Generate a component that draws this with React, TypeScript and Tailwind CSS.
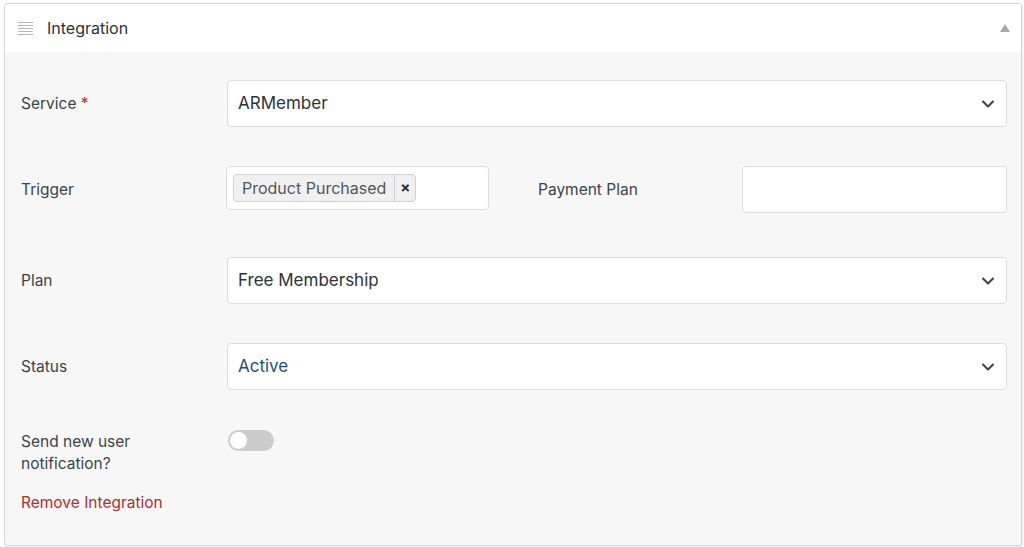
import { ChevronDown } from "lucide-react"

function Chevron() {
  return <ChevronDown className="h-5 w-5 text-[#3c434a]" strokeWidth={2.5} />
}

function SelectBox({ value, blue }: { value: string; blue?: boolean }) {
  return (
    <div className="flex h-[47px] flex-1 items-center justify-between rounded-[4px] border border-[#dcdcde] bg-white pl-[10px] pr-[8px]">
      <span className={blue ? "text-[17px] text-[#1d4f7c]" : "text-[17px] text-[#2c3338]"}>{value}</span>
      <Chevron />
    </div>
  )
}

export default function App() {
  return (
    <div className="h-[547px] w-[1024px] bg-white pt-[3px] pl-[4px] font-['Inter',sans-serif] text-[#3c434a]">
      <div className="h-[543px] w-[1018px] overflow-hidden rounded-[3px] border border-[#d4d4d6] bg-[#f7f7f7] shadow-[1px_1px_2px_rgba(0,0,0,0.08)]">
        <div className="flex h-[48px] items-center justify-between bg-white pl-[13px] pr-[11px]">
          <div className="flex items-center">
            <div className="flex w-[15px] flex-col gap-[2px]">
              {[0, 1, 2, 3, 4].map((i) => <div key={i} className="h-[1px] bg-[#b4b6b9]" />)}
            </div>
            <span className="ml-[14px] text-[16px] text-[#2c3338]">Integration</span>
          </div>
          <div className="h-0 w-0 border-x-[5px] border-b-[8px] border-x-transparent border-b-[#a7aaad]" />
        </div>
        <div className="pl-[16px] pr-[14px] pt-[28px]">
          <div className="flex items-center">
            <div className="w-[206px] text-[15.5px]">Service <span className="text-[#b32d2e]">*</span></div>
            <SelectBox value="ARMember" />
          </div>
          <div className="mt-[39px] flex items-start">
            <div className="w-[205px] pt-[13px] text-[15.5px] leading-[22px]">Trigger</div>
            <div className="flex h-[44px] w-[263px] items-center rounded-[4px] border border-[#dcdcde] bg-white pl-[6px]">
              <div className="flex h-[28px] items-center rounded-[4px] border border-[#d0d0d0] bg-[#f0f0f0]">
                <span className="px-[8px] text-[16px] text-[#50575e]">Product Purchased</span>
                <span className="flex h-full w-[21px] items-center justify-center border-l border-[#d0d0d0] text-[15px] font-bold text-[#2c3338]">×</span>
              </div>
            </div>
            <div className="ml-[49px] w-[204px] pt-[13px] text-[15.5px] leading-[22px]">Payment Plan</div>
            <div className="h-[47px] flex-1 rounded-[4px] border border-[#dcdcde] bg-white" />
          </div>
          <div className="mt-[44px] flex items-center">
            <div className="w-[206px] text-[15.5px]">Plan</div>
            <SelectBox value="Free Membership" />
          </div>
          <div className="mt-[39px] flex items-center">
            <div className="w-[206px] text-[15.5px]">Status</div>
            <SelectBox value="Active" blue />
          </div>
          <div className="mt-[40px] flex items-start">
            <div className="w-[207px] pt-[1px] text-[15.5px] leading-[22px]">Send new user<br />notification?</div>
            <div className="flex h-[21px] w-[46px] items-center rounded-full bg-[#cccccc] px-[2px]">
              <div className="h-[17px] w-[17px] rounded-full bg-white" />
            </div>
          </div>
          <div className="mt-[16px] text-[15.5px] text-[#b32d2e]">Remove Integration</div>
        </div>
      </div>
    </div>
  )
}
